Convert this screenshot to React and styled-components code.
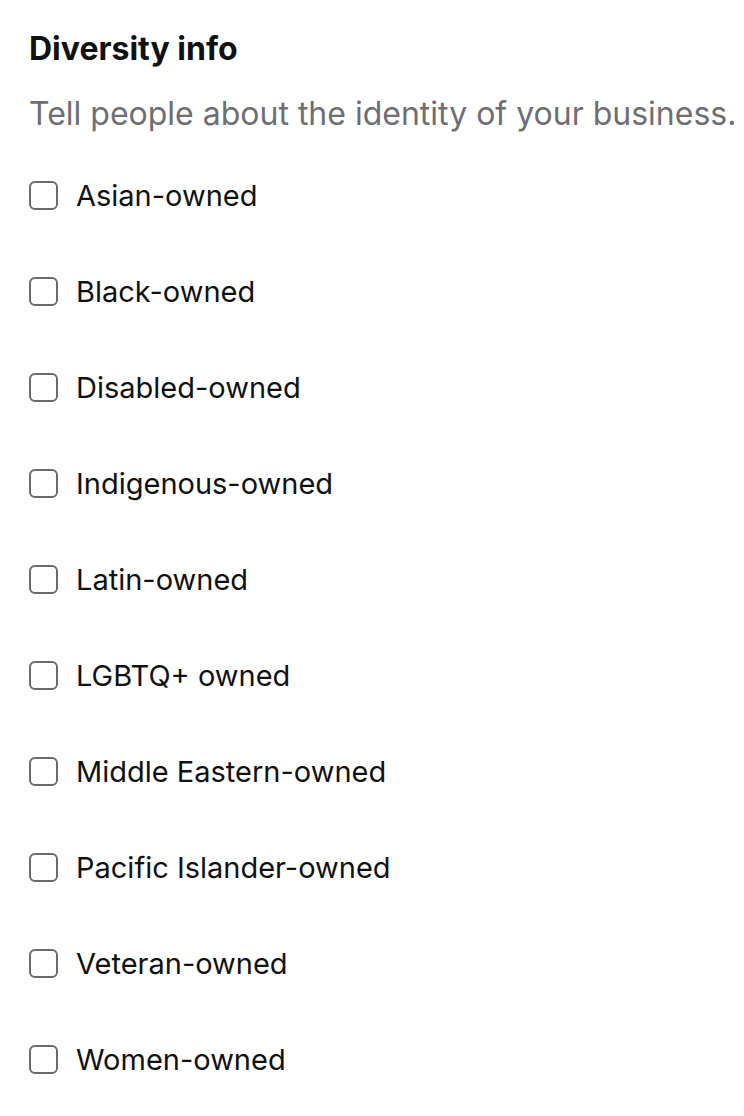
import React from "react";
import styled, { createGlobalStyle } from "styled-components";

const GlobalStyle = createGlobalStyle`
  body {
    margin: 0;
    background: #ffffff;
    font-family: Inter, "Noto Sans", sans-serif;
    -webkit-font-smoothing: antialiased;
  }
`;

const Page = styled.div`
  padding: 29px 0 0 29px;
`;

const Title = styled.h2`
  margin: 0;
  font-size: 32px;
  font-weight: 700;
  color: #111111;
  line-height: 40px;
`;

const Subtitle = styled.p`
  margin: 25px 0 0;
  font-size: 32px;
  color: #6e6e73;
  line-height: 40px;
  white-space: nowrap;
`;

const List = styled.div`
  display: flex;
  flex-direction: column;
  margin-top: 13px;
`;

const Row = styled.label`
  display: flex;
  align-items: center;
  gap: 18px;
  height: 96px;
`;

const Box = styled.span`
  width: 29px;
  height: 29px;
  box-sizing: border-box;
  border: 2px solid #6b6b6b;
  border-radius: 6px;
  flex-shrink: 0;
`;

const Label = styled.span`
  font-size: 29px;
  color: #111111;
`;

const options = [
  "Asian-owned",
  "Black-owned",
  "Disabled-owned",
  "Indigenous-owned",
  "Latin-owned",
  "LGBTQ+ owned",
  "Middle Eastern-owned",
  "Pacific Islander-owned",
  "Veteran-owned",
  "Women-owned",
];

export default function App() {
  return (
    <Page>
      <GlobalStyle />
      <Title>Diversity info</Title>
      <Subtitle>Tell people about the identity of your business.</Subtitle>
      <List>
        {options.map((o) => (
          <Row key={o}>
            <Box />
            <Label>{o}</Label>
          </Row>
        ))}
      </List>
    </Page>
  );
}
